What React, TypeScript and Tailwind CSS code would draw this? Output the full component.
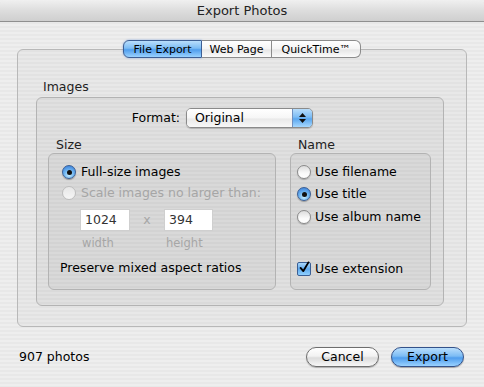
import React from 'react';

const Radio = ({ on, disabled }: { on?: boolean; disabled?: boolean }) => {
  if (on) {
    return (
      <span className="relative flex h-[14px] w-[14px] shrink-0 items-center justify-center rounded-full border border-[#3a5f95] bg-[radial-gradient(circle_at_50%_75%,#c6ecff_0%,#6fb5f0_45%,#2f74d6_100%)] shadow-[0_1px_1px_rgba(0,0,0,0.3)]">
        <span className="h-[5px] w-[5px] rounded-full bg-[#111]" />
      </span>
    );
  }
  return (
    <span
      className={
        disabled
          ? 'h-[14px] w-[14px] shrink-0 rounded-full border border-[#bdbdbd] bg-[linear-gradient(180deg,#e6e6e6,#f6f6f6)]'
          : 'h-[14px] w-[14px] shrink-0 rounded-full border border-[#8a8a8a] bg-[linear-gradient(180deg,#dcdcdc_0%,#fafafa_60%,#ffffff_100%)] shadow-[0_1px_1px_rgba(0,0,0,0.2)]'
      }
    />
  );
};

const Check = () => (
  <span className="flex h-[14px] w-[14px] shrink-0 items-end justify-center rounded-[2px] border border-[#3a5f95] bg-[linear-gradient(180deg,#a9d7fb_0%,#5ea8ec_50%,#8fd0ff_100%)]">
    <svg width="14" height="15" viewBox="0 0 14 15" className="-mt-[3px] ml-[1px]">
      <path d="M2 8 L5.5 12 L12 1" fill="none" stroke="#000" strokeWidth="2.4" strokeLinecap="round" strokeLinejoin="round" />
    </svg>
  </span>
);

export default function App() {
  return (
    <div className="h-[387px] w-[484px] overflow-hidden bg-[repeating-linear-gradient(180deg,#eeeeee_0px,#eeeeee_2px,#e8e8e8_2px,#e8e8e8_4px)] font-['DejaVu_Sans',sans-serif] text-[12.5px] text-black">
      <div className="flex h-[22px] items-center justify-center rounded-t-[5px] border-b border-[#8f8f8f] bg-[linear-gradient(180deg,#f0f0f0_0%,#dddddd_50%,#cfcfcf_100%)] text-[13px] text-[#222]">
        Export Photos
      </div>

      <div className="px-[17px] pt-[18px]">
        <div className="relative z-10 flex h-[18px] justify-center text-[11px] leading-none">
          <div className="flex w-[79px] items-center justify-center rounded-l-[6px] border border-[#3d5f94] bg-[linear-gradient(180deg,#b9defc_0%,#7cbcf4_45%,#4f9ded_55%,#9ad2ff_100%)] shadow-[0_0_2px_rgba(60,120,220,0.6)]">
            File Export
          </div>
          <div className="flex w-[70px] items-center justify-center border-y border-r border-[#8c8c8c] bg-[linear-gradient(180deg,#ffffff_0%,#f4f4f4_50%,#e6e6e6_55%,#fbfbfb_100%)]">
            Web Page
          </div>
          <div className="flex w-[89px] items-center justify-center rounded-r-[6px] border-y border-r border-[#8c8c8c] bg-[linear-gradient(180deg,#ffffff_0%,#f4f4f4_50%,#e6e6e6_55%,#fbfbfb_100%)]">
            QuickTime™
          </div>
        </div>

        <div className="-mt-[9px] h-[278px] w-[450px] rounded-[6px] border border-[#b8b8b8] bg-[rgba(0,0,0,0.025)] pt-[29px]">
          <div className="ml-[25px] h-[16px] leading-[16px] text-[#222]">Images</div>
          <div className="ml-[18px] mt-[2px] h-[209px] w-[408px] rounded-[6px] border border-[#b3b3b3] bg-[rgba(0,0,0,0.03)] pt-[10px]">
            <div className="flex h-[20px] items-center">
              <div className="w-[143px] text-right">Format:</div>
              <div className="ml-[6px] flex h-[20px] w-[127px] overflow-hidden rounded-[5px] border border-[#8a8a8a] shadow-[0_1px_1px_rgba(0,0,0,0.2)]">
                <div className="flex flex-1 items-center bg-[linear-gradient(180deg,#ffffff_0%,#f6f6f6_50%,#e9e9e9_55%,#f8f8f8_100%)] pl-[8px]">
                  Original
                </div>
                <div className="flex w-[20px] flex-col items-center justify-center gap-[2px] border-l border-[#6f8fbf] bg-[linear-gradient(180deg,#b8ddfb_0%,#7cbcf4_45%,#5aa6ee_55%,#a6d8ff_100%)]">
                  <svg width="7" height="4" viewBox="0 0 7 4"><path d="M3.5 0 L7 4 L0 4 Z" fill="#111" /></svg>
                  <svg width="7" height="4" viewBox="0 0 7 4"><path d="M0 0 L7 0 L3.5 4 Z" fill="#111" /></svg>
                </div>
              </div>
            </div>

            <div className="ml-[11px] mt-[9px] flex gap-[14px]">
              <div>
                <div className="h-[16px] pl-[8px] leading-[16px] text-[#222]">Size</div>
                <div className="h-[137px] w-[228px] rounded-[6px] border border-[#b3b3b3] bg-[rgba(0,0,0,0.03)] pl-[13px] pt-[10px]">
                  <div className="flex h-[16px] items-center gap-[5px]">
                    <Radio on />
                    <span>Full-size images</span>
                  </div>
                  <div className="mt-[5px] flex h-[16px] items-center gap-[5px] text-[#a6a6a6]">
                    <Radio disabled />
                    <span>Scale images no larger than:</span>
                  </div>
                  <div className="ml-[18px] mt-[8px] flex items-center">
                    <div className="flex h-[22px] w-[50px] items-center border border-[#cfcfcf] bg-white pl-[4px] text-[#333]">1024</div>
                    <div className="w-[34px] text-center text-[#a6a6a6]">x</div>
                    <div className="flex h-[22px] w-[49px] items-center border border-[#cfcfcf] bg-white pl-[4px] text-[#333]">394</div>
                  </div>
                  <div className="mt-[5px] flex h-[16px] items-center text-[11.5px] text-[#a6a6a6]">
                    <span className="ml-[20px] w-[84px]">width</span>
                    <span>height</span>
                  </div>
                  <div className="-ml-[2px] mt-[8px] h-[16px] leading-[16px]">Preserve mixed aspect ratios</div>
                </div>
              </div>
              <div>
                <div className="h-[16px] pl-[8px] leading-[16px] text-[#222]">Name</div>
                <div className="h-[137px] w-[141px] rounded-[6px] border border-[#b3b3b3] bg-[rgba(0,0,0,0.03)] pl-[6px] pt-[10px]">
                  <div className="flex h-[16px] items-center gap-[4px]">
                    <Radio />
                    <span>Use filename</span>
                  </div>
                  <div className="mt-[6px] flex h-[16px] items-center gap-[4px]">
                    <Radio on />
                    <span>Use title</span>
                  </div>
                  <div className="mt-[7px] flex h-[16px] items-center gap-[4px]">
                    <Radio />
                    <span>Use album name</span>
                  </div>
                  <div className="mt-[36px] flex h-[16px] items-center gap-[4px]">
                    <Check />
                    <span>Use extension</span>
                  </div>
                </div>
              </div>
            </div>
          </div>
        </div>

        <div className="mt-[20px] flex h-[20px] items-center justify-between pl-[2px] pr-[3px]">
          <span>907 photos</span>
          <div className="flex gap-[12px]">
            <button className="flex h-[20px] w-[73px] items-center justify-center rounded-full border border-[#6e6e6e] bg-[linear-gradient(180deg,#ffffff_0%,#f2f2f2_45%,#dcdcdc_55%,#f7f7f7_100%)] text-[12.5px] shadow-[0_1px_1px_rgba(0,0,0,0.25)]">
              Cancel
            </button>
            <button className="flex h-[20px] w-[73px] items-center justify-center rounded-full border border-[#34528a] bg-[linear-gradient(180deg,#b9defc_0%,#7cbcf4_45%,#4f9ded_55%,#9ad2ff_100%)] text-[12.5px] shadow-[0_1px_1px_rgba(0,0,0,0.3)]">
              Export
            </button>
          </div>
        </div>
      </div>
    </div>
  );
}
